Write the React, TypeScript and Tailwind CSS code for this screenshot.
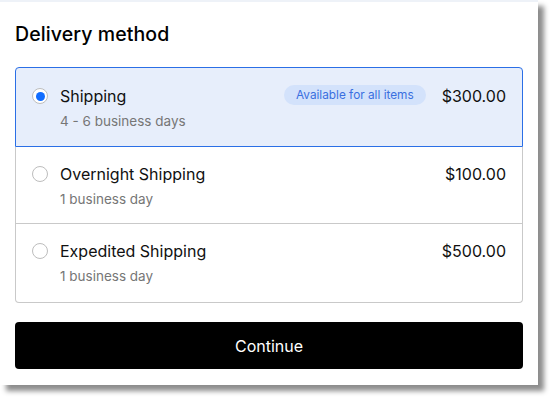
import React from "react";

const rows = [
  { title: "Shipping", sub: "4 - 6 business days", price: "$300.00", selected: true, badge: "Available for all items" },
  { title: "Overnight Shipping", sub: "1 business day", price: "$100.00", selected: false },
  { title: "Expedited Shipping", sub: "1 business day", price: "$500.00", selected: false },
];

export default function App() {
  return (
    <div className="w-[554px] h-[400px] bg-white" style={{ fontFamily: "Inter, 'Noto Sans', sans-serif" }}>
      <div className="w-[538px] h-[385px] bg-white shadow-[6px_6px_5px_rgba(0,0,0,0.45)] flex flex-col">
        <div className="h-[2px] bg-[#eef2f8]" />
        <div className="px-[15px] flex flex-col">
          <h1 className="mt-[20px] text-[19.5px] leading-[24px] font-medium text-black tracking-[0.1px]">Delivery method</h1>
          <div className="mt-[21px] flex flex-col">
            {rows.map((r, i) => (
              <div
                key={i}
                className={
                  r.selected
                    ? "flex items-start border border-[#2b6fe6] bg-[#e7eefb] rounded-t-[4px] pl-[16px] pr-[16px] pt-[16px] pb-[15px]"
                    : i === rows.length - 1
                    ? "flex items-start border-x border-b border-[#c9c9c9] rounded-b-[4px] pl-[16px] pr-[16px] pt-[15px] pb-[16px]"
                    : "flex items-start border-x border-b border-[#c9c9c9] pl-[16px] pr-[16px] pt-[15px] pb-[14px]"
                }
              >
                <div className="h-6 flex items-center">
                  <div className="w-[16px] h-[16px] rounded-full border border-[#bdbdbd] bg-white flex items-center justify-center">
                    {r.selected && <div className="w-[9px] h-[9px] rounded-full bg-[#116dff]" />}
                  </div>
                </div>
                <div className="ml-[12px] flex-1 flex flex-col">
                  <div className="text-[16px] leading-6 text-[#111]">{r.title}</div>
                  <div className="mt-[3px] text-[13.5px] leading-5 text-[#767676]">{r.sub}</div>
                </div>
                {r.badge && (
                  <div className="mt-[1px] mr-[16px] h-[20px] px-[12px] rounded-full bg-[#d3e2fb] text-[11.8px] leading-[20px] text-[#3a6fe0]">
                    {r.badge}
                  </div>
                )}
                <div className="text-[16px] leading-6 text-[#111]">{r.price}</div>
              </div>
            ))}
          </div>
          <button className="mt-[19px] h-[47px] w-full rounded-[4px] bg-black text-white text-[16px] flex items-center justify-center">
            Continue
          </button>
        </div>
      </div>
    </div>
  );
}
